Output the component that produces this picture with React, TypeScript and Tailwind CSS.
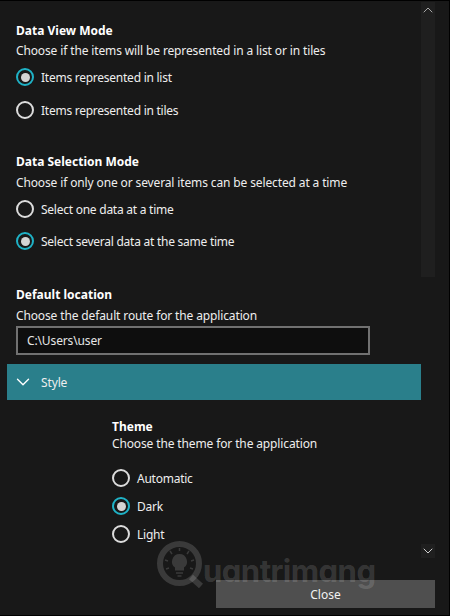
import { ChevronDown, ChevronUp } from 'lucide-react';

const Radio = ({ checked, label }: { checked?: boolean; label: string }) => (
    <div className="flex items-center h-[18px]">
        {checked ? (
            <span className="w-[18px] h-[18px] rounded-full border-[2.5px] border-[#1fb2c6] flex items-center justify-center shrink-0">
                <span className="w-[9px] h-[9px] rounded-full bg-[#d4d4d4]"></span>
            </span>
        ) : (
            <span className="w-[18px] h-[18px] rounded-full border-[2px] border-[#dcdcdc] shrink-0"></span>
        )}
        <span className="ml-[7px] pt-[2px] text-[12px] tracking-[-0.25px] text-[#eeeeee]">{label}</span>
    </div>
);

const Heading = ({ children }: { children: string }) => (
    <h2 className="text-[12px] leading-[18px] font-bold text-white">{children}</h2>
);

const Desc = ({ children }: { children: string }) => (
    <p className="text-[12px] tracking-[-0.13px] leading-[18px] text-[#eeeeee] whitespace-nowrap">{children}</p>
);

const App = () => {
    return (
        <div className="relative w-[450px] h-[616px] overflow-hidden bg-[#181818] border-t border-b border-r border-black font-['Noto_Sans','Open_Sans',sans-serif] flex">
            <main className="w-[421px] shrink-0">
                <div className="pl-4 pt-[21px]">
                    <Heading>Data View Mode</Heading>
                    <div className="mt-[2px]"><Desc>Choose if the items will be represented in a list or in tiles</Desc></div>
                    <div className="mt-[8px] flex flex-col gap-[15px]">
                        <Radio checked label="Items represented in list" />
                        <Radio label="Items represented in tiles" />
                    </div>

                    <div className="mt-[34px]"><Heading>Data Selection Mode</Heading></div>
                    <div className="mt-[3px]"><Desc>Choose if only one or several items can be selected at a time</Desc></div>
                    <div className="mt-[8px] flex flex-col gap-[14px]">
                        <Radio label="Select one data at a time" />
                        <Radio checked label="Select several data at the same time" />
                    </div>

                    <div className="mt-[36px]"><Heading>Default location</Heading></div>
                    <div className="mt-[3px]"><Desc>Choose the default route for the application</Desc></div>
                    <div className="mt-[1px] w-[354px] h-[29px] bg-[#0e0e0e] border-2 border-[#717171] pl-[9px] flex items-center text-[12px] tracking-[-0.13px] text-[#e6e6e6]">
                        C:\Users\user
                    </div>
                </div>

                <div className="mt-[9px] ml-[7px] h-[36px] bg-[#2a7f8b] flex items-center pl-[4.5px] text-[12px] tracking-[-0.13px] text-[#eeeeee]">
                    <ChevronDown size={22} strokeWidth={1.5} className="text-white" />
                    <span className="ml-[7.5px] pt-[2px]">Style</span>
                </div>

                <div className="pl-[112px] pt-[18px]">
                    <Heading>Theme</Heading>
                    <div className="-mt-px"><Desc>Choose the theme for the application</Desc></div>
                    <div className="mt-[16px] flex flex-col gap-[10px]">
                        <Radio label="Automatic" />
                        <Radio checked label="Dark" />
                        <Radio label="Light" />
                    </div>
                </div>
            </main>

            <aside className="w-[14px] h-[556px] mt-px shrink-0 flex flex-col">
                <div className="h-[275px] bg-[#1f1f1f] flex justify-center">
                    <ChevronUp size={16} strokeWidth={1.5} className="text-[#a8a8a8] shrink-0" />
                </div>
                <div className="flex-1"></div>
                <div className="h-[14px] bg-[#1f1f1f] flex justify-center items-center">
                    <ChevronDown size={16} strokeWidth={1.5} className="text-[#cfcfcf] shrink-0" />
                </div>
            </aside>

            <button className="absolute left-[216px] top-[579px] w-[219px] h-[28px] pt-[2px] bg-[#4f4f4f] text-[12px] text-[#f2f2f2]">
                Close
            </button>

            {/* watermark sits over everything, hence the see-through white */}
            <div className="absolute left-[157px] top-[540px] flex items-start pointer-events-none text-white/15">
                <svg width="50" height="50" viewBox="0 0 50 50" fill="none" className="shrink-0">
                    <circle cx="22.500" cy="22.500" r="19.500" stroke="currentColor" strokeWidth="6" />
                    <path d="M34 36 L44 45" stroke="currentColor" strokeWidth="6" />
                    <path d="M22.500 13a7.500 7.500 0 0 0-4.500 13.500v3h9v-3a7.500 7.500 0 0 0-4.500-13.500z" fill="currentColor" />
                    <path d="M19 32h7M20.500 35h4" stroke="currentColor" strokeWidth="1.500" />
                    <path d="M22.500 7v3M13 10l2 3M32 10l-2 3M8 19l3 1M37 19l-3 1M9 28l3-1M36 28l-3-1" stroke="currentColor" strokeWidth="1.500" />
                </svg>
                <span className="-ml-[4px] mt-[12px] text-[31px] leading-[36px] tracking-[-0.5px] font-['Inter',sans-serif] font-bold [font-feature-settings:'cv11']">uantrimang</span>
            </div>
        </div>
    );
};

export default App;
